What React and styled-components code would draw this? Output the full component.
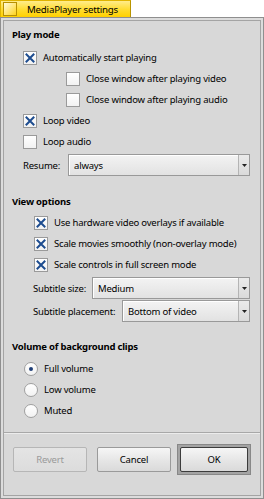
import React from 'react'
import styled, { createGlobalStyle } from 'styled-components'

const GlobalStyle = createGlobalStyle`
  html, body {
    margin: 0;
    padding: 0;
    background: #ffffff;
  }
  body {
    font-family: 'Noto Sans', 'DejaVu Sans', sans-serif;
    font-size: 9.5px;
    letter-spacing: -0.2px;
    color: #000000;
  }
`

const Window = styled.div`
  width: 264px;
  height: 499px;
  display: flex;
  flex-direction: column;
`

const Tab = styled.div`
  width: 131px;
  height: 17px;
  box-sizing: border-box;
  border: 1px solid #e0b400;
  border-right-color: #b89400;
  border-bottom: none;
  background: linear-gradient(#ffec8a, #ffdc2e 55%, #ffd000);
  display: flex;
  align-items: center;
  padding-left: 2px;
`

const CloseBox = styled.div`
  width: 14px;
  height: 14px;
  box-sizing: border-box;
  border: 1px solid #b89000;
  background: linear-gradient(135deg, #fffbe0, #ffe36a 60%, #ffd41a);
  margin-right: 10px;
`

const Title = styled.span`
  font-size: 9.7px;
  white-space: nowrap;
`

const Frame = styled.div`
  flex: 1;
  display: flex;
  border: 1px solid #8f8f8f;
  padding: 2px;
  background: #dcdcdc;
`

const Inner = styled.div`
  flex: 1;
  display: flex;
  flex-direction: column;
  border: 1px solid #a4a4a4;
  background: #d8d8d8;
`

const Body = styled.div`
  flex: 1;
  display: flex;
  flex-direction: column;
  padding-top: 6px;
`

const Heading = styled.div`
  height: 16px;
  line-height: 16px;
  font-weight: bold;
  padding-left: 8px;
  margin-top: ${p => p.$top || 0}px;
  margin-bottom: ${p => p.$bottom || 0}px;
`

const OptionRow = styled.div`
  height: 21px;
  display: flex;
  align-items: center;
  padding-left: ${p => p.$indent}px;
  white-space: nowrap;
`

const Box = styled.div`
  width: 14px;
  height: 14px;
  box-sizing: border-box;
  border: 1px solid #9a9a9a;
  background: linear-gradient(#ffffff, #f2f2f2);
  margin-right: 6px;
  display: flex;
  align-items: center;
  justify-content: center;
  flex-shrink: 0;
`

const Round = styled(Box)`
  border-radius: 50%;
  border-color: #a0a0a0;
`

const Dot = styled.div`
  width: 4px;
  height: 4px;
  border-radius: 50%;
  background: #1f3f78;
`

const FieldRow = styled.div`
  height: 22px;
  display: flex;
  align-items: center;
  padding-left: ${p => p.$indent}px;
  padding-right: 10px;
  margin-top: ${p => p.$top || 0}px;
`

const FieldLabel = styled.div`
  width: ${p => p.$width}px;
  flex-shrink: 0;
  white-space: nowrap;
`

const Popup = styled.div`
  flex: 1;
  height: 22px;
  box-sizing: border-box;
  display: flex;
  border: 1px solid #999999;
  background: linear-gradient(#f3f3f3, #e2e2e2);
  box-shadow: inset 1px 1px 0 #ffffff;
`

const PopupText = styled.div`
  flex: 1;
  display: flex;
  align-items: center;
  padding-left: 5px;
`

const PopupArrow = styled.div`
  width: 10px;
  border-left: 1px solid #b4b4b4;
  display: flex;
  align-items: center;
  justify-content: center;
  background: linear-gradient(#eaeaea, #dadada);
`

const Filler = styled.div`
  flex: 1;
`

const ButtonBar = styled.div`
  height: 51px;
  border-top: 1px solid #a8a8a8;
  box-shadow: inset 0 1px 0 #ececec;
  display: flex;
  align-items: flex-start;
  padding: 11px 0 0 9px;
`

const Button = styled.div`
  width: ${p => p.$width || 74}px;
  height: 25px;
  box-sizing: border-box;
  margin-top: ${p => (p.$inset ? 0 : 3)}px;
  margin-right: ${p => p.$gap || 0}px;
  border: 1px solid ${p => (p.$disabled ? '#b6b6b6' : p.$default ? '#3c3c3c' : '#9a9a9a')};
  border-radius: 2px;
  background: ${p =>
    p.$disabled
      ? 'linear-gradient(#e4e4e4, #dcdcdc)'
      : 'linear-gradient(#f6f6f6, #e4e4e4 60%, #dadada)'};
  color: ${p => (p.$disabled ? '#9a9a9a' : '#000000')};
  display: flex;
  align-items: center;
  justify-content: center;
`

const DefaultFrame = styled.div`
  width: 74px;
  height: 31px;
  box-sizing: border-box;
  padding: 2px;
  border: 1px solid #888888;
  background: #a4a4a4;
`

const Cross = () => (
  <svg width="10" height="10" viewBox="0 0 10 10">
    <path d="M1.5 1.5 L8.5 8.5 M8.5 1.5 L1.5 8.5" stroke="#1d4c8f" strokeWidth="2" strokeLinecap="square" />
  </svg>
)

const Arrow = () => (
  <svg width="5" height="3" viewBox="0 0 5 3">
    <path d="M0 0 H5 L2.5 3 Z" fill="#222222" />
  </svg>
)

const CheckBox = ({ indent, checked, children }) => (
  <OptionRow $indent={indent}>
    <Box>{checked && <Cross />}</Box>
    {children}
  </OptionRow>
)

const Radio = ({ selected, children }) => (
  <OptionRow $indent={20}>
    <Round>{selected && <Dot />}</Round>
    {children}
  </OptionRow>
)

const MenuField = ({ label, labelWidth, indent, value, top }) => (
  <FieldRow $indent={indent} $top={top}>
    <FieldLabel $width={labelWidth}>{label}</FieldLabel>
    <Popup>
      <PopupText>{value}</PopupText>
      <PopupArrow>
        <Arrow />
      </PopupArrow>
    </Popup>
  </FieldRow>
)

export default function App() {
  return (
    <>
      <GlobalStyle />
      <Window>
        <Tab>
          <CloseBox />
          <Title>MediaPlayer settings</Title>
        </Tab>
        <Frame>
          <Inner>
            <Body>
              <Heading $bottom={4}>Play mode</Heading>
              <CheckBox indent={19} checked>Automatically start playing</CheckBox>
              <CheckBox indent={62}>Close window after playing video</CheckBox>
              <CheckBox indent={62}>Close window after playing audio</CheckBox>
              <CheckBox indent={19} checked>Loop video</CheckBox>
              <CheckBox indent={19}>Loop audio</CheckBox>
              <MenuField label="Resume:" labelWidth={45} indent={19} value="always" top={2} />

              <Heading $top={18} $bottom={2}>View options</Heading>
              <CheckBox indent={30} checked>Use hardware video overlays if available</CheckBox>
              <CheckBox indent={30} checked>Scale movies smoothly (non-overlay mode)</CheckBox>
              <CheckBox indent={30} checked>Scale controls in full screen mode</CheckBox>
              <MenuField label="Subtitle size:" labelWidth={59} indent={29} value="Medium" top={2} />
              <MenuField label="Subtitle placement:" labelWidth={89} indent={29} value="Bottom of video" top={1} />

              <Heading $top={17} $bottom={3}>Volume of background clips</Heading>
              <Radio selected>Full volume</Radio>
              <Radio>Low volume</Radio>
              <Radio>Muted</Radio>
              <Filler />
            </Body>
            <ButtonBar>
              <Button $disabled $gap={10}>Revert</Button>
              <Button $gap={6}>Cancel</Button>
              <DefaultFrame>
                <Button $default $inset $width={68}>OK</Button>
              </DefaultFrame>
            </ButtonBar>
          </Inner>
        </Frame>
      </Window>
    </>
  )
}
